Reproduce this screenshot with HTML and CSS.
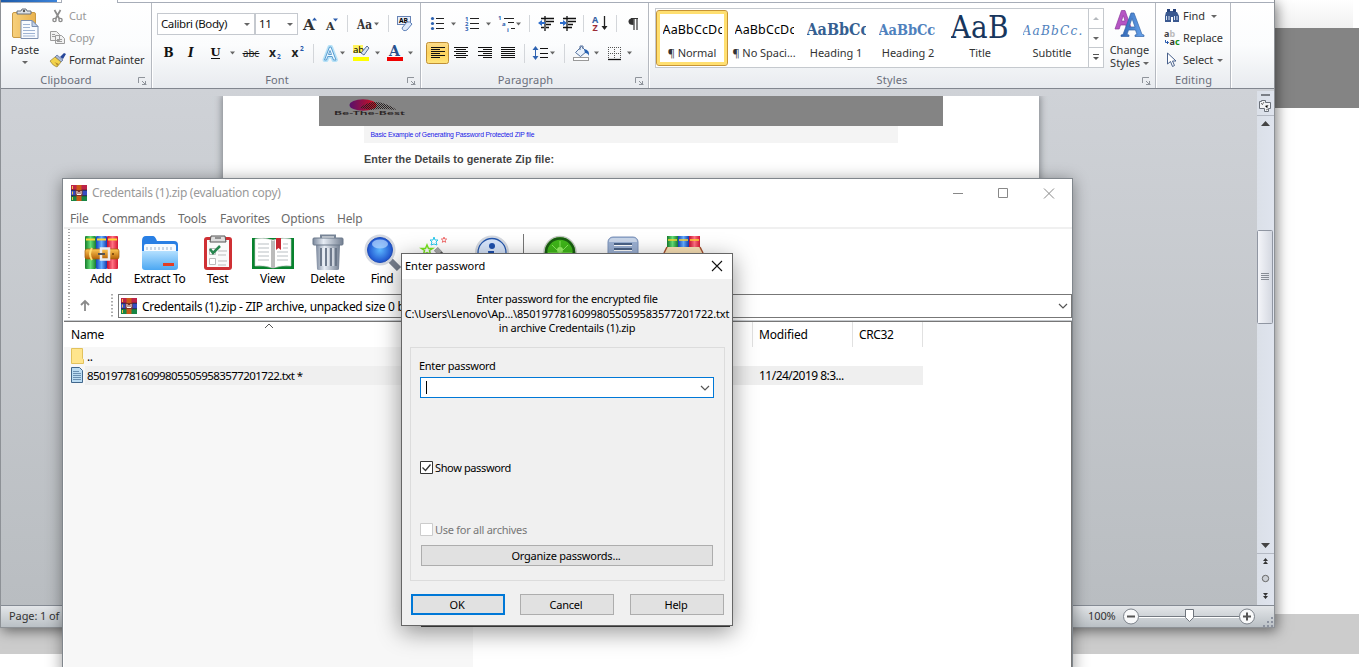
FILE: index.html
```html
<!DOCTYPE html>
<html lang="en">
<head>
<meta charset="utf-8">
<title>Credentails (1).zip</title>
<link rel="stylesheet" href="styles.css">
</head>
<body>
<div class="desktop">
  <div class="backdrop"><div class="back-top"></div><div class="back-band"></div><div class="back-page"></div><div class="back-footer"></div></div>

  <section class="word">
    <div class="tabs"><div class="file-tab"></div><div class="home-tab"></div></div>
    <div class="ribbon">
      <div class="group clipboard">
        <div class="group-body">
          <div class="paste">
            <svg width="34" height="38" viewBox="9 4 34 38"><defs><linearGradient id="gb" x2="1"><stop stop-color="#f7d07c"/><stop offset="1" stop-color="#e9b24e"/></linearGradient></defs><rect x="13.500" y="12.500" width="23" height="25" rx="1.500" fill="url(#gb)" stroke="#c99a45"/><path d="M18 14v-3h4l1-2h4l1 2h4v3z" fill="#dfe3e8" stroke="#68717d"/><circle cx="25" cy="11" r="1.200" fill="#555"/><path d="M22 20.500h11l6 6v12h-17z" fill="#f8fbff" stroke="#7d90b0"/><path d="M33 20.500v6h6z" fill="#c3d2e8" stroke="#7d90b0"/><path d="M24 24.500h7M24 27.500h7M24 30.500h12M24 33.500h12M24 36h12" stroke="#9fb4d3"/></svg>
            <span>Paste</span><i class="arrow"></i>
          </div>
          <div class="clip-list">
            <div class="cmd off"><svg width="20" height="22" viewBox="49 5 20 22"><path d="M54.500 10l5 9M60.500 10l-5 9" stroke="#8c8c8c" stroke-width="1.700"/><circle cx="54.500" cy="20" r="1.600" fill="none" stroke="#8c8c8c" stroke-width="1.400"/><circle cx="60.500" cy="20" r="1.600" fill="none" stroke="#8c8c8c" stroke-width="1.400"/></svg><span>Cut</span></div>
            <div class="cmd off"><svg width="20" height="22" viewBox="49 27 20 22"><path d="M50.500 31.500h6l3 3v6h-9zM55.500 35.500h6l3 3v5h-9z" fill="#f1f1f1" stroke="#9c9c9c"/><path d="M52 34.500h3M52 36.500h3M57 39.500h5M57 41.500h5" stroke="#9c9c9c"/></svg><span>Copy</span></div>
            <div class="cmd"><svg width="20" height="22" viewBox="49 49 20 22"><path d="M60 57l4-4 2 1-3 5z" fill="#26469a"/><path d="M57 55l6 5-2 2-6-5z" fill="#aab8d3" stroke="#50679b" stroke-width=".7"/><path d="M55 57l6 5-4 5q-4-1-7-6z" fill="#f3d34a" stroke="#94803a" stroke-width=".7"/><path d="M52 61q4 1 5 5l2-2z" fill="#b48b2a"/></svg><span>Format Painter</span></div>
          </div>
        </div>
        <div class="group-label"><span>Clipboard</span><svg class="launch" width="9" height="9" viewBox="0 0 9 9"><path d="M.5 6V.5H7M4 4l3 3M4 7.500h4.500M7.500 4v4" fill="none" stroke="#8f949b"/></svg></div>
      </div>

      <div class="group font-group">
        <div class="group-body rows">
          <div class="row">
            <div class="combo family">Calibri (Body)<i class="arrow"></i></div><div class="combo size">11<i class="arrow"></i></div>
            <svg width="122" height="22" viewBox="298 13 122 22"><g class="serif" font-weight="700" fill="#333"><text x="303" y="30" font-size="15">A</text><text x="326" y="30" font-size="11">A</text><text x="357" y="29" font-size="12.500" textLength="15" lengthAdjust="spacingAndGlyphs">Aa</text></g><path d="M312 20.500h5l-2.500-3zM333 18.500h5l-2.500 3z" fill="#2f5fae"/><path d="M374 22.500h5l-2.500 3z" fill="#666"/><path d="M347.500 15v17M388.500 15v17" stroke="#d3d6da"/><rect x="397.500" y="16.500" width="13" height="8" fill="#e8eefa" stroke="#6783b5"/><text x="399" y="23" class="sans" font-size="6.500" font-weight="700" textLength="9" lengthAdjust="spacingAndGlyphs">AB</text><path d="M402 28l5-6q3-1 5 2l-5 6q-4 2-5-2z" fill="#dce8fa" stroke="#5c7fb7"/></svg>
          </div>
          <div class="row second">
            <svg width="263" height="24" viewBox="157 42 263 24"><g class="serif" font-weight="700" fill="#111"><text x="163.500" y="57" font-size="12">B</text><text x="188" y="57" font-size="12" font-style="italic">I</text><text x="210.500" y="56" font-size="11.500">U</text></g><path d="M211 58.500h9" stroke="#111"/><g class="sans" fill="#222"><text x="243" y="57" font-size="11" textLength="16" lengthAdjust="spacingAndGlyphs">abc</text><text x="269" y="57" font-size="12" font-weight="700">x</text><text x="291.500" y="57" font-size="12" font-weight="700">x</text></g><path d="M242.500 53.500h17" stroke="#111"/><g class="sans" fill="#2456a8" font-size="6.500" font-weight="700"><text x="277" y="59">2</text><text x="300" y="51">2</text></g><path d="M230 51.500h5l-2.500 3zM340 51.500h5l-2.500 3zM375 51.500h5l-2.500 3zM408 51.500h5l-2.500 3z" fill="#666"/><path d="M313.500 44v19" stroke="#d3d6da"/><path d="M324.500 60l5-13h1.500l5 13h-2.500l-1.300-3.500h-4.500l-1.200 3.500z" fill="none" stroke="#b5e1f7" stroke-width="4" stroke-linejoin="round"/><path d="M324.500 60l5-13h1.500l5 13h-2.500l-1.300-3.500h-4.500l-1.200 3.500zM328.500 54.500h3l-1.500-4z" fill="#eef9ff" stroke="#5a9cd0" stroke-width="1"/><rect x="353" y="45" width="10" height="8" fill="#fff35e"/><text x="353" y="53" class="sans" font-size="9.500">ab</text><path d="M361 53l6-7 2 2-5 7z" fill="#d7e4f5" stroke="#5b7097"/><rect x="353" y="57" width="16" height="4" fill="#ff0"/><text x="389" y="56" class="serif" font-size="14" font-weight="700" fill="#28518f">A</text><rect x="387" y="57" width="16" height="4" fill="#f00000"/></svg>
          </div>
        </div>
        <div class="group-label"><span>Font</span><svg class="launch" width="9" height="9" viewBox="0 0 9 9"><path d="M.5 6V.5H7M4 4l3 3M4 7.500h4.500M7.500 4v4" fill="none" stroke="#8f949b"/></svg></div>
      </div>

      <div class="group para-group">
        <div class="group-body rows">
          <div class="row">
            <svg width="222" height="22" viewBox="425 13 222 22"><g fill="#2d62b1"><circle cx="432.500" cy="18.500" r="1.600"/><circle cx="432.500" cy="23.500" r="1.600"/><circle cx="432.500" cy="28.500" r="1.600"/></g><path d="M436 18.500h8M436 23.500h8M436 28.500h8M470 18.500h9M470 23.500h9M470 28.500h9M504 18.500h10M508 22.500h6M511 28.500h4" stroke="#222"/><g class="sans" fill="#2d62b1" font-size="6" font-weight="700"><text x="465" y="20.500">1</text><text x="465" y="25.700">2</text><text x="465" y="31">3</text><text x="498" y="20">1</text><text x="502" y="26">a</text><text x="507" y="31.500">i</text></g><path d="M451 22.500h5l-2.500 3zM486 22.500h5l-2.500 3zM516 22.500h5l-2.500 3z" fill="#666"/><path d="M529.500 15v17M583.500 15v17M616.500 15v17" stroke="#d3d6da"/><path d="M541 18.500h13M546 21.500h8M546 24.500h5M546 27.500h3M541 27.500h3M545 16v15M563 18.500h13M568 21.500h8M568 24.500h5M563 27.500h9M567 16v15" stroke="#111" stroke-width="1.300"/><path d="M538 23l4-3v2h3v2h-3v2zM567 23l-4-3v2h-3v2h3v2z" fill="#2d6dcc"/><g class="sans" font-size="9" font-weight="700"><text x="592" y="22.500" fill="#3462a4">A</text><text x="592.500" y="31" fill="#9b2b35">Z</text></g><path d="M604.500 16v13" stroke="#222" stroke-width="1.300"/><path d="M601.500 26h6l-3 4z" fill="#222"/><path d="M634 18v12M637 18v12M631 18.500h7" stroke="#333" stroke-width="1.200"/><path d="M633.500 18v7q-5 0-5-3.500t5-3.500" fill="#333"/></svg>
          </div>
          <div class="row second">
            <svg width="222" height="24" viewBox="425 42 222 24"><defs><linearGradient id="act" y2="1" x2="0"><stop stop-color="#fcdc8b"/><stop offset=".5" stop-color="#fdd35e"/><stop offset="1" stop-color="#ffe57b"/></linearGradient></defs><rect x="426.500" y="42.500" width="22" height="21" rx="2" fill="url(#act)" stroke="#c08f35"/><path d="M431 47.500h14M431 49.500h9M431 51.500h14M431 53.500h9M431 55.500h14M431 57.500h9M454 47.500h14M456 49.500h10M454 51.500h14M456 53.500h10M454 55.500h14M456 57.500h10M478 47.500h14M483 49.500h9M478 51.500h14M483 53.500h9M478 55.500h14M483 57.500h9M501 47.500h14M501 49.500h14M501 51.500h14M501 53.500h14M501 55.500h14M501 57.500h14M540 48.500h8M540 53.500h8M540 57.500h8" stroke="#111"/><path d="M524.500 44v19M564.500 44v19" stroke="#d3d6da"/><path d="M535.500 48v10" stroke="#2d62b1"/><path d="M532.500 50h6l-3-4zM532.500 56h6l-3 4z" fill="#2d62b1"/><path d="M550 51.500h5l-2.500 3zM594 51.500h5l-2.500 3zM627 51.500h5l-2.500 3z" fill="#666"/><path d="M575.500 52.500l6-6 5 5-6 5z" fill="#eaf2fc" stroke="#56739e"/><path d="M580 50v-4h3v3" fill="none" stroke="#56739e"/><path d="M584 49q6 1 5 7-1-3-4-3z" fill="#2862b2"/><rect x="573.500" y="57.500" width="15" height="3" fill="#fff" stroke="#999"/><path d="M608.500 47v11M614.500 47v11M620.500 47v11M608 47.500h13M608 53.500h13" stroke="#555" stroke-dasharray="1 1"/><path d="M608 59.500h13" stroke="#111" stroke-width="1.300"/></svg>
          </div>
        </div>
        <div class="group-label"><span>Paragraph</span><svg class="launch" width="9" height="9" viewBox="0 0 9 9"><path d="M.5 6V.5H7M4 4l3 3M4 7.500h4.500M7.500 4v4" fill="none" stroke="#8f949b"/></svg></div>
      </div>

      <div class="group styles-group">
        <div class="group-body">
          <div class="gallery">
            <div class="style selected"><b class="sample normal">AaBbCcDc</b><span>¶ Normal</span></div>
            <div class="style"><b class="sample normal">AaBbCcDc</b><span>¶ No Spaci...</span></div>
            <div class="style"><b class="sample h1">AaBbCc</b><span>Heading 1</span></div>
            <div class="style"><b class="sample h2">AaBbCc</b><span>Heading 2</span></div>
            <div class="style"><b class="sample title">AaB</b><span>Title</span></div>
            <div class="style"><b class="sample subtitle">AaBbCc.</b><span>Subtitle</span></div>
            <div class="gallery-nav"><div><i class="arrow up"></i></div><div><i class="arrow"></i></div><div><svg width="8" height="7" viewBox="0 0 8 7"><path d="M1 .5h6" stroke="#555"/><path d="M1 3h6l-3 3z" fill="#555"/></svg></div></div>
          </div>
          <div class="change">
            <svg width="34" height="32" viewBox="1112 8 34 32"><defs><linearGradient id="ba" x2="1"><stop stop-color="#2f66b5"/><stop offset="1" stop-color="#6aa6ee"/></linearGradient></defs><path d="M1114 29l6.500-18.500h3.500l6.500 18.500h-4.500l-1.300-4h-5.200l-1.300 4zM1120.500 21h3.500l-1.700-5.500z" fill="#b655c4" stroke="#8b3a9c" stroke-width=".7"/><path d="M1120 36.500v-1.500l2-.5 8-21.500h3l8 21.500 2 .5v1.500h-9v-1.500l2-.5-1.500-4.500h-7l-1.500 4.500 2 .5v1.500zM1128 27h6l-3-8.500z" fill="url(#ba)" stroke="#3566a8" stroke-width=".7"/></svg>
            <span>Change</span><span>Styles <i class="arrow"></i></span>
          </div>
        </div>
        <div class="group-label"><span>Styles</span><svg class="launch" width="9" height="9" viewBox="0 0 9 9"><path d="M.5 6V.5H7M4 4l3 3M4 7.500h4.500M7.500 4v4" fill="none" stroke="#8f949b"/></svg></div>
      </div>

      <div class="group editing">
        <div class="group-body edit-list">
          <div class="cmd"><svg width="21" height="22" viewBox="1162 5 21 22"><path d="M1166 12h4v-1h4v1h3l2 4v6h-6v-5h-2v5h-6v-6z" fill="#3a5990"/><path d="M1167 9h3v3h-3zM1173 9h3v3h-3z" fill="#27437b"/><path d="M1166.500 16v4M1169 16v4M1174.500 16v4M1177 16v4" stroke="#d7e3f4"/></svg><span>Find</span><i class="arrow"></i></div>
          <div class="cmd"><svg width="21" height="22" viewBox="1162 27 21 22"><g class="sans" font-size="9" font-weight="700"><text x="1164" y="37" fill="#444">a</text><text x="1169.500" y="37" fill="#bbb">b</text><text x="1169.500" y="45" fill="#333">a</text><text x="1175" y="45" fill="#159015">c</text></g><path d="M1165.500 40v2.500h3M1167 41l1.500 1.500-1.500 1.500" fill="none" stroke="#2b5bad"/></svg><span>Replace</span></div>
          <div class="cmd"><svg width="21" height="22" viewBox="1162 49 21 22"><path d="M1167.500 53v11l3-2.500 2 5 2-1-2-4.500h3.500z" fill="#fff" stroke="#48608b"/></svg><span>Select</span><i class="arrow near"></i></div>
        </div>
        <div class="group-label"><span>Editing</span></div>
      </div>
    </div>

    <div class="workspace">
      <div class="doc">
        <div class="banner"><svg width="84" height="26" viewBox="330 97 84 26"><defs><linearGradient id="lg" x2="1"><stop stop-color="#57106c"/><stop offset="1" stop-color="#d5101b"/></linearGradient><pattern id="mesh" width="2" height="2" patternUnits="userSpaceOnUse"><path d="M0 0h1v1H0zM1 1h1v1H1z" fill="#292222"/></pattern></defs><ellipse cx="363" cy="105" rx="13.500" ry="5.800" fill="url(#lg)"/><path d="M360 108q12-10 28-3 7 3 8 5-18-2-24 0z" fill="url(#mesh)"/><text x="334" y="114.500" class="sans" font-size="5.500" font-weight="600" fill="#292323" textLength="71" lengthAdjust="spacingAndGlyphs">Be-The-Best</text></svg></div>
        <div class="doc-link">Basic Example of Generating Password Protected ZIP file</div>
        <div class="doc-heading">Enter the Details to generate Zip file:</div>
      </div>
      <div class="scroll"><svg width="17" height="514" viewBox="1257 91 17 514"><defs><linearGradient id="st" x2="1"><stop stop-color="#dbe0e8"/><stop offset="1" stop-color="#dfe4ee"/></linearGradient><linearGradient id="th" x2="1"><stop stop-color="#f5f6fa"/><stop offset="1" stop-color="#d3d7e0"/></linearGradient></defs><rect x="1257" y="91" width="17" height="514" fill="url(#st)"/><path d="M1261 95h9" stroke="#7b7f86" stroke-width="2"/><path d="M1257 115.500h17M1257 553.500h17" stroke="#b4b9c3"/><path d="M1259.500 101.500h2v-1h4v2h5v6h-2v3h-4v-3h-5z" fill="#f2f3f5" stroke="#6b717a"/><path d="M1261 103l2 2M1264 102l-2 3M1265 106l2 2 1-3M1266 110l2-1" stroke="#777"/><path d="M1261 126h9l-4.500-5z M1261 543h9l-4.500 5z" fill="#444"/><rect x="1257.500" y="230.500" width="15" height="93" rx="1" fill="url(#th)" stroke="#9096a2"/><path d="M1261 273.500h8M1261 275.500h8M1261 277.500h8M1261 279.500h8" stroke="#888d96"/><path d="M1263 561h5l-2.500-3zM1263 564h5l-2.500-3zM1263 593h5l-2.500 3zM1263 596h5l-2.500 3z" fill="#333"/><circle cx="1265.500" cy="578.500" r="3.200" fill="#ccd0d6" stroke="#666"/></svg></div>
    </div>
    <div class="status"><span>Page: 1 of</span><div class="zoom"><span>100%</span><svg width="154" height="22" viewBox="1120 605 154 22"><path d="M1131 615.500h116" stroke="#747a82"/><path d="M1131 616.500h116" stroke="#fff"/><g fill="#f8f9fa" stroke="#7c828a"><circle cx="1131" cy="615.500" r="7.500"/><circle cx="1247" cy="615.500" r="7.500"/></g><path d="M1127 615.500h8M1243 615.500h8M1247 611.500v8" stroke="#555" stroke-width="2"/><path d="M1185.500 608.500h8v8l-4 4-4-4z" fill="#fff" stroke="#6f757d"/><path d="M1271 616h2v2h-2zM1267 620h2v2h-2zM1271 620h2v2h-2zM1263 624h2v2h-2zM1267 624h2v2h-2zM1271 624h2v2h-2z" fill="#8c929f"/></svg></div></div>
  </section>

  <section class="rar">
    <svg class="defs" width="0" height="0"><defs><symbol id="books" viewBox="0 0 16 16"><rect y="0" width="16" height="5" fill="#bd2348"/><rect y="5" width="16" height="6" fill="#354cc2"/><rect y="11" width="16" height="5" fill="#188644"/><path d="M0 5.200h16M0 10.800h16" stroke="#222" stroke-width=".8"/><path d="M1.500 1v3M1.500 6.500v3M1.500 12v3" stroke="#f3c64a"/><rect x="5.500" width="5" height="16" fill="#cc5a18"/><rect x="4.500" y="5" width="7" height="6" fill="#7d3326"/><path d="M6 6v3.500h4V6M8 7v3" fill="none" stroke="#fff"/></symbol></defs></svg>
    <header class="titlebar"><svg width="16" height="16"><use href="#books"/></svg><span>Credentails (1).zip (evaluation copy)</span><svg class="winctl" width="110" height="24" viewBox="948 181 110 24"><path d="M953 193.500h10M998.500 188.500h9v9h-9zM1044 188.500l10 10M1054 188.500l-10 10" fill="none" stroke="#888"/></svg></header>
    <nav class="menu"><span>File</span><span>Commands</span><span>Tools</span><span>Favorites</span><span>Options</span><span>Help</span></nav>
    <div class="tools">
      <div class="tool w50"><svg width="38" height="38" viewBox="82 234 38 38"><defs><linearGradient id="g1" x2="1"><stop stop-color="#167c2c"/><stop offset=".5" stop-color="#64df76"/><stop offset="1" stop-color="#187c31"/></linearGradient><linearGradient id="g2" x2="1"><stop stop-color="#1544bb"/><stop offset=".5" stop-color="#64adff"/><stop offset="1" stop-color="#143bae"/></linearGradient><linearGradient id="g3" x2="1"><stop stop-color="#c70e2d"/><stop offset=".5" stop-color="#ff7182"/><stop offset="1" stop-color="#d41733"/></linearGradient><linearGradient id="g4" y2="1" x2="0"><stop stop-color="#ffc955"/><stop offset="1" stop-color="#b56207"/></linearGradient></defs><rect x="85" y="236" width="11" height="33" rx="1" fill="url(#g1)"/><rect x="96" y="236" width="11" height="33" rx="1" fill="url(#g2)"/><rect x="107" y="236" width="11" height="33" rx="1" fill="url(#g3)"/><path d="M86 239.500h9M97 239.500h9M108 239.500h9" stroke="#ffd831" stroke-width="2"/><rect x="85" y="249" width="34" height="10" rx="2" fill="url(#g4)" stroke="#a45c0b" stroke-width=".7"/><path d="M92 248q-4 6 0 12" fill="none" stroke="#ffdd75" stroke-width="2"/><rect x="101" y="248.500" width="8" height="11" fill="none" stroke="#eee" stroke-width="2.500"/><path d="M98 254h7" stroke="#555" stroke-width="2"/><circle cx="113" cy="254" r="1" fill="#6b3b0a"/></svg><span>Add</span></div>
      <div class="tool w67"><svg width="40" height="38" viewBox="140 234 40 38"><defs><linearGradient id="fb" y2="1" x2="0"><stop stop-color="#b4e0ff"/><stop offset="1" stop-color="#4ba7f2"/></linearGradient></defs><path d="M142 265v-24q0-5 4-5h7q2 0 4 5h17q4 0 4 4v20z" fill="#297fe4"/><path d="M144 254v-8q0-2 2-2h28q2 0 2 2v8z" fill="#f7fbff"/><path d="M147 247v3M151 247v3M155 247v3M159 247v3M163 247v3M167 247v3M171 247v3" stroke="#c9d6e5" stroke-width="2"/><path d="M142 251h36v16q0 3-3 3h-30q-3 0-3-3z" fill="url(#fb)"/><rect x="163" y="263" width="11" height="3" fill="#e33d24"/></svg><span>Extract To</span></div>
      <div class="tool w49"><svg width="34" height="38" viewBox="201 234 34 38"><rect x="204" y="237" width="28" height="33" rx="3" fill="#cf3034"/><path d="M207 240h22v27h-22z" fill="#fafafa"/><path d="M211 236h14l1 6h-16z" fill="#ddd" stroke="#555"/><path d="M215 238h6" stroke="#444"/><path d="M209.500 248.500h6v6h-6zM209.500 258.500h6v6h-6z" fill="#fff" stroke="#bbb"/><path d="M210 249l3 4 7-7" fill="none" stroke="#28864f" stroke-width="2.500"/><path d="M218 251h9M218 255h8M218 261h9M218 265h8" stroke="#bbb"/></svg><span>Test</span></div>
      <div class="tool w61"><svg width="44" height="38" viewBox="251 234 44 38"><path d="M252 238h42v31h-42z" fill="#07822d"/><path d="M255 239q9-2 18 1 9-3 18-1v27q-9-1-18 2-9-3-18-2z" fill="#fff" stroke="#ccc" stroke-width=".6"/><path d="M271 240l2 1 2-1v28h-4z" fill="#bbb"/><path d="M258 244h11M258 248h11M258 252h11M258 256h11M258 260h11M277 252h11M277 256h11M277 260h11M283 244h5M283 248h5" stroke="#b9bfc3"/><path d="M276 238h5v12l-2.500-2-2.500 2z" fill="#c82833"/></svg><span>View</span></div>
      <div class="tool w49"><svg width="34" height="38" viewBox="311 234 34 38"><defs><linearGradient id="bin" x2="1"><stop stop-color="#7c899d"/><stop offset=".35" stop-color="#e7edf5"/><stop offset="1" stop-color="#737f91"/></linearGradient></defs><path d="M316 245h24l-1 24q0 1-2 1h-18q-2 0-2-1z" fill="url(#bin)"/><rect x="313" y="238" width="30" height="7" rx="1" fill="url(#bin)" stroke="#6b788a"/><path d="M321 238v-2.500h14v2.500" fill="none" stroke="#778496" stroke-width="2"/><path d="M321 248v18M326 248v18M331 248v18M336 248v18" stroke="#667385" stroke-width="1.800"/><path d="M323 248v18M328 248v18M333 248v18" stroke="#f5f8fc"/></svg><span>Delete</span></div>
      <div class="tool w60"><svg width="42" height="38" viewBox="361 234 42 38"><defs><radialGradient id="mag"><stop stop-color="#5cb7ff"/><stop offset="1" stop-color="#1646c9"/></radialGradient></defs><path d="M389 259l10 10" stroke="#777f8e" stroke-width="6"/><circle cx="380" cy="250" r="14" fill="url(#mag)" stroke="#d5d9e1" stroke-width="3"/><circle cx="380" cy="250" r="12.500" fill="none" stroke="#1f4eb9"/><ellipse cx="380" cy="244" rx="8" ry="4.500" fill="#b7d7ff" opacity=".7"/></svg><span>Find</span></div>
      <div class="tool w50"><svg width="40" height="38" viewBox="417 234 40 38"><path d="M436 249l17 18" stroke="#555" stroke-width="5"/><path d="M436 249l4 4" stroke="#aaa" stroke-width="5"/><path d="M434 237l1 3h3l-2 2 1 3-3-1-3 1 1-3-2-2h3z" fill="#fff" stroke="#28c9ed"/><path d="M427 245l1.500 3.500h4l-3 2 1 4-3.500-2-3.500 2 1-4-3-2h4z" fill="#fff" stroke="#78e520" stroke-width="1.500"/><path d="M444 237l.7 2h2l-1.500 1.300.5 2-1.700-1-1.700 1 .5-2-1.500-1.300h2z" fill="#fff" stroke="#f17070"/></svg></div>
      <div class="tool w60"><svg width="38" height="38" viewBox="473 234 38 38"><circle cx="492" cy="252.500" r="16" fill="#e7eefb" stroke="#d4d8df" stroke-width="2"/><circle cx="492" cy="252.500" r="14" fill="#d7e5fb" stroke="#2556aa" stroke-width="1.300"/><circle cx="492" cy="246" r="3" fill="#1d4fad"/><path d="M488 251h6v10h-5z" fill="#1d4fad"/></svg></div>
      <div class="rule"></div>
      <div class="tool w70"><svg width="38" height="38" viewBox="540 234 38 38"><circle cx="560" cy="252.500" r="16" fill="#4abb22" stroke="#c5c8c4" stroke-width="1.500"/><circle cx="560" cy="252.500" r="14" fill="#3fb619" stroke="#195d12" stroke-width="2.500"/><circle cx="560" cy="250" r="3" fill="#9af568"/><path d="M560 241v25M548 253h24M552 245l16 16M568 245l-16 16" stroke="#8be65f"/></svg></div>
      <div class="tool w58"><svg width="38" height="38" viewBox="604 234 38 38"><rect x="608" y="237" width="30" height="28" rx="5" fill="#9bb0d2" stroke="#7c93bb"/><path d="M609 242q0-4 4-4h20q4 0 4 4" fill="#c9d6e9"/><path d="M614 244h18M614 249h18M614 254h18" stroke="#32496f" stroke-width="1.300"/><path d="M614 245.500h18M614 250.500h18" stroke="#fff"/></svg></div>
      <div class="tool w64"><svg width="40" height="38" viewBox="664 234 40 38"><rect x="667" y="236" width="11" height="15" fill="url(#g1)"/><rect x="678" y="236" width="11" height="15" fill="url(#g2)"/><rect x="689" y="236" width="11" height="15" fill="url(#g3)"/><path d="M668 240h9M679 240h9M690 240h9" stroke="#ffd831" stroke-width="1.500"/><path d="M666 247h35l2 23h-39z" fill="#f4cf93"/><path d="M668 247h31l3 6h-38z" fill="#fae1b5"/><path d="M667 247l-3 6M700 247l3 6" stroke="#a65332" stroke-width="1.500"/></svg></div>
    </div>
    <div class="address-row"><svg class="up" width="54" height="24" viewBox="64 294 54 24"><path d="M85 311v-10M81 305l4-4 4 4" fill="none" stroke="#8a8a8a" stroke-width="1.800"/><path d="M112 294v24" stroke="#aaa" stroke-width="2" stroke-dasharray="1.500 2"/></svg><div class="address"><svg width="16" height="16"><use href="#books"/></svg><span>Credentails (1).zip - ZIP archive, unpacked size 0 bytes</span><svg class="chev" width="10" height="8" viewBox="0 0 10 8"><path d="M1 2l4 4 4-4" fill="none" stroke="#555" stroke-width="1.200"/></svg></div></div>
    <div class="list">
      <div class="cols"><span class="name">Name<svg class="sort" width="10" height="6" viewBox="0 0 10 6"><path d="M1 5l4-4 4 4" fill="none" stroke="#555"/></svg></span><span class="c mod">Modified</span><span class="c crc">CRC32</span></div>
      <div class="files">
        <div class="file"><svg width="20" height="19" viewBox="67 347 20 19"><path d="M71.500 348.500h11v10l1 1v4h-12z" fill="#ffe58d" stroke="#e2c25d"/></svg><span>..</span></div>
        <div class="file two"><svg width="20" height="19" viewBox="67 366 20 19"><path d="M71.500 367.500h8l3 3v12h-11z" fill="#bbdcf3" stroke="#41678c"/><path d="M73 371.500h6M73 373.500h8M73 375.500h8M73 377.500h8M73 379.500h8" stroke="#6a8fb2"/></svg><span class="fname">85019778160998055059583577201722.txt *</span><span class="date">11/24/2019 8:3...</span></div>
      </div>
    </div>
  </section>

  <section class="dialog">
    <header><span>Enter password</span><svg width="12" height="12" viewBox="0 0 12 12"><path d="M1 1l10 10M11 1L1 11" stroke="#111" stroke-width="1.100"/></svg></header>
    <div class="message"><span>Enter password for the encrypted file</span><span class="path">C:\Users\Lenovo\Ap...\85019778160998055059583577201722.txt</span><span>in archive Credentails (1).zip</span></div>
    <div class="panel">
      <label class="plabel">Enter password</label>
      <div class="input"><i class="caret"></i><svg width="10" height="8" viewBox="0 0 10 8"><path d="M1 2l4 4 4-4" fill="none" stroke="#555" stroke-width="1.200"/></svg></div>
      <div class="check show"><svg width="13" height="13" viewBox="0 0 13 13"><path d="M.5.5h12v12H.5z" fill="#fff" stroke="#333"/><path d="M2.500 6.500l3 3 5-6" fill="none" stroke="#333" stroke-width="1.300"/></svg><span>Show password</span></div>
      <div class="check all"><svg width="13" height="13" viewBox="0 0 13 13"><path d="M.5.5h12v12H.5z" fill="#fff" stroke="#ccc"/></svg><span>Use for all archives</span></div>
      <button class="organize">Organize passwords...</button>
    </div>
    <div class="buttons"><button class="primary">OK</button><button>Cancel</button><button>Help</button></div>
  </section>
  <div class="edge"></div>
</div>
</body>
</html>
```
FILE: styles.css
```css
* { box-sizing: border-box; }
body { margin: 0; background: #fff; overflow: hidden; font: 12px/16px "Noto Sans", "Open Sans", sans-serif; color: #000; }
svg { display: block; flex: none; overflow: visible; }
svg text { white-space: pre; }
.sans { font-family: "Noto Sans", sans-serif; }
.serif { font-family: "DejaVu Serif", serif; }
.desktop { position: relative; width: 1359px; height: 667px; overflow: hidden; }
.backdrop { display: flex; flex-direction: column; height: 667px; }
.back-top { height: 28px; background: linear-gradient(#fff, #f1f1f1); margin-right: 6px; }
.back-band { height: 80px; background: #848484; }
.back-page { height: 506px; }
.back-footer { height: 40px; background: #ccc; }

.word { position: absolute; left: 0; top: 0; width: 1275px; height: 628px; border: 1px solid #8d9196; border-top: 0; box-shadow: 2px 3px 12px rgba(0,0,0,.5); background: #c3c7cc; display: flex; flex-direction: column; }
.tabs { height: 3px; flex: none; background: #fff; border-bottom: 1px solid #a7adb8; display: flex; }
.file-tab { width: 56px; height: 2px; background: linear-gradient(90deg, #1d5aa8, #3b83d9); }
.home-tab { width: 57px; height: 3px; margin-left: 4px; background: #fff; border: solid #a7adb8; border-width: 0 1px; }
.ribbon { height: 86px; flex: none; display: flex; background: linear-gradient(#fff, #fbfcfd 50%, #e8ebef); border-bottom: 1px solid #82878f; }
.group { border-right: 1px solid #b5b9c0; box-shadow: 1px 0 #fff; display: flex; flex-direction: column; color: #333; flex: none; }
.group-body { height: 69px; display: flex; }
.group-body.rows { flex-direction: column; padding-top: 10px; }
.row { display: flex; height: 22px; }
.row.second { margin-top: 7px; height: 24px; }
.group-label { height: 16px; line-height: 15px; display: flex; color: #6a6e7b; font-size: 11px; letter-spacing: .15px; }
.group-label span { flex: 1; text-align: center; padding-left: 1px; }
.launch { margin: 5px 4px 0 8px; }
.clipboard { width: 151px; }
.font-group { width: 269px; padding-left: 5px; }
.font-group .group-label { margin-left: -3px; }
.para-group .group-label { margin-left: -2px; }
.para-group { width: 228px; padding-left: 4px; }
.styles-group { width: 507px; }
.editing { width: 75px; }
.arrow { display: inline-block; width: 0; height: 0; border: 3px solid transparent; border-top-color: #666; border-bottom: 0; }
.arrow.up { border-top: 0; border-bottom: 3px solid #b5b9be; }
.paste { width: 48px; display: flex; flex-direction: column; align-items: center; font-size: 11px; line-height: 16px; padding-top: 1px; }
.paste .arrow { margin-top: 3px; }
.clip-list { padding-top: 2px; }
.cmd { height: 22px; display: flex; align-items: center; font-size: 11px; white-space: nowrap; letter-spacing: -.05px; }
.clip-list .cmd { letter-spacing: -.14px; }
.cmd .arrow { margin-left: 6px; }
.cmd .arrow.near { margin-left: 4px; }
.off { color: #999; }
.edit-list { flex-direction: column; padding: 2px 0 0 6px; }
.combo { height: 22px; background: #fff; border: 1px solid #c5c9cf; padding: 0 4px 0 3px; line-height: 20px; font-size: 11.500px; display: flex; align-items: center; justify-content: space-between; letter-spacing: -.4px; color: #111; white-space: nowrap; }
.family { width: 98px; }
.size { width: 43px; }
.gallery { margin: 5px 0 0 6px; height: 60px; width: 449px; border: 1px solid #c5c9ce; display: flex; background: #fff; }
.style { width: 72px; display: flex; flex-direction: column; align-items: center; font-size: 11px; padding-top: 5px; white-space: nowrap; letter-spacing: -.05px; }
.style span { line-height: 16px; margin-top: -1px; }
.selected { height: 56px; margin-top: 1px; border: 1px solid #c69435; border-radius: 3px; box-shadow: inset 0 0 0 3px #ffdf70; padding-top: 3px; }
.sample { width: 59px; height: 32px; line-height: 32px; overflow: hidden; font-weight: 400; color: #000; font-size: 12.500px; }
.normal { letter-spacing: .15px; }
.h1, .h2, .title, .subtitle { font-family: "DejaVu Serif Condensed", "DejaVu Serif", serif; }
.h1 { color: #365f91; font-weight: 700; font-size: 16px; }
.h2 { color: #4f81bd; font-weight: 700; font-size: 14.500px; }
.title { color: #17365d; font-size: 31px; line-height: 26px; height: 29px; margin-bottom: 3px; letter-spacing: .4px; }
.subtitle { color: #4f81bd; font-style: italic; letter-spacing: 1.200px; font-size: 13.500px; }
.gallery-nav { width: 15px; border-left: 1px solid #c5c9ce; display: flex; flex-direction: column; }
.gallery-nav div { flex: 1; display: grid; place-items: center; border-bottom: 1px solid #c5c9ce; }
.gallery-nav div:last-child { border: 0; }
.change { width: 51px; display: flex; flex-direction: column; align-items: center; font-size: 11px; line-height: 13px; padding-top: 5px; }
.change svg { margin-bottom: 3px; }
.change .arrow { vertical-align: 2px; }

.workspace { flex: 1; display: flex; justify-content: space-between; background: linear-gradient(#cfd2d7, #b9bdc1); padding-top: 2px; }
.doc { width: 816px; margin: 5px 0 0 222px; background: #fff; box-shadow: 0 0 7px 1px #7e8287; clip-path: inset(0 -12px 0 -12px); }
.banner { width: 624px; height: 30px; margin-left: 96px; padding: 1px 0 0 11px; background: #848484; }
.doc-link { width: 534px; height: 17px; margin-left: 141px; padding-left: 6.500px; background: #f4f4f4; color: #2020e8; font: 6.800px/18px "Liberation Sans", sans-serif; letter-spacing: -.18px; }
.doc-heading { margin: 9px 0 0 141px; color: #444; font: bold 10.800px/14px "Liberation Sans", sans-serif; letter-spacing: .06px; }
.scroll { width: 17px; }
.status { height: 22px; border-top: 1px solid #858b94; background: linear-gradient(#e3e6e9, #bac0c5); display: flex; justify-content: space-between; line-height: 19px; font-size: 11px; padding-left: 8px; color: #333; letter-spacing: -.1px; }
.zoom { display: flex; }
.zoom > span { width: 32px; }

.rar { position: absolute; left: 62px; top: 178px; width: 1011px; height: 500px; border: 1px solid #80868c; padding-left: 1px; background: #fff; box-shadow: 0 2px 15px rgba(0,0,0,.4); display: flex; flex-direction: column; }
.defs { height: 0; }
.titlebar { height: 28px; display: flex; align-items: center; padding: 0 14px 1px 7px; color: #999; letter-spacing: -.27px; }
.titlebar span { margin: 1px 0 0 5px; }
.winctl { margin-left: auto; }
.menu { height: 22px; display: grid; grid-template-columns: 32px 76px 42px 61px 56px 40px; padding-left: 6px; line-height: 23px; color: #6b6b6b; border-bottom: 2px solid #f0f0f0; letter-spacing: -.15px; }
.tools { height: 64px; display: flex; padding: 5px 0 0 8px; margin-left: 4px; background: repeating-linear-gradient(#aaa 0 1px, transparent 1px 3px) 0 0 / 2px 100% no-repeat; }
.tool { display: flex; flex-direction: column; align-items: center; flex: none; letter-spacing: -.35px; }
.tool span { line-height: 16px; margin-top: -1px; }
.w50 { width: 50px; } .w67 { width: 67px; } .w49 { width: 49px; } .w61 { width: 61px; } .w60 { width: 60px; } .w70 { width: 70px; } .w58 { width: 58px; } .w64 { width: 64px; }
.rule { width: 1px; height: 34px; background: #777; margin: 0 0 0 1px; }
.address-row { height: 28px; display: flex; align-items: center; padding-bottom: 1px; border-bottom: 1px solid #c8cbcf; background: repeating-linear-gradient(#aaa 0 1px, transparent 1px 3px) 4px 0 / 2px 25px no-repeat; }
.address { flex: 1; height: 24px; border: 1px solid #777; display: flex; align-items: center; padding: 0 3px 0 2px; white-space: nowrap; letter-spacing: -.31px; }
.address span { margin: 1px 0 0 5px; }
.chev { margin-left: auto; }
.list { flex: 1; border-top: 1px solid #777; border-right: 1px solid #777; }
.cols { display: grid; grid-template-columns: 688px 100px 71px; height: 25px; line-height: 25px; letter-spacing: -.15px; }
.name { padding-left: 7px; display: grid; grid-template-columns: 193px 10px; }
.sort { margin-top: 1px; }
.c { border-left: 1px solid #e1e1e1; padding-left: 6px; }
.crc { border-right: 1px solid #e1e1e1; letter-spacing: -.4px; }
.files { height: 330px; background: linear-gradient(#f7f7f7, #f7f7f7) 0 0 / 409px 100% no-repeat; }
.file { height: 19px; display: flex; line-height: 19px; padding-left: 3px; width: 859px; letter-spacing: -.52px; }
.two { background: linear-gradient(#efefef, #efefef) 21px 0 no-repeat; }
.fname { width: 672px; font-size: 11.500px; letter-spacing: -.57px; }

.dialog { position: absolute; left: 401px; top: 253px; width: 332px; height: 373px; border: 1px solid #666; background: #f0f0f0; box-shadow: 0 6px 22px rgba(0,0,0,.42); font-family: "Noto Sans", sans-serif; font-size: 11px; letter-spacing: -.27px; }
.dialog header { height: 25px; background: #fff; display: flex; align-items: center; justify-content: space-between; padding: 0 9px 1px 3px; letter-spacing: 0; }
.message { display: flex; flex-direction: column; align-items: center; padding-top: 13px; line-height: 14.500px; height: 68px; white-space: nowrap; }
.path { letter-spacing: -.16px; }
.panel { width: 315px; height: 234px; margin-left: 8px; border: 1px solid #dcdcdc; padding: 10px 11px 0 9px; }
.plabel { display: block; height: 19px; line-height: 15px; margin-left: -1px; }
.input { width: 294px; height: 21px; background: #fff; border: 1px solid #0078d7; display: flex; align-items: center; justify-content: space-between; padding: 0 3px 0 5px; }
.caret { width: 1px; height: 13px; background: #000; }
.check { display: flex; align-items: center; gap: 2px; height: 16px; }
.check svg { margin-top: -1px; }
.show { margin-top: 62px; letter-spacing: -.37px; }
.all { margin-top: 46px; color: #777; }
button { border: 1px solid #adadad; background: #e1e1e1; color: #000; font: 11px/16px "Noto Sans", sans-serif; letter-spacing: -.22px; padding: 0 2px 0 0; height: 21px; }
.organize { width: 292px; margin: 7px 0 0 1px; display: block; }
.buttons { display: grid; grid-template-columns: 109px 110px 94px; padding: 13px 8px 0 9px; }
.buttons button { width: 94px; }
.buttons .primary { border: 2px solid #0078d7; }
.edge { position: absolute; left: 421px; top: 626px; width: 309px; height: 1px; background: #333; }
```
